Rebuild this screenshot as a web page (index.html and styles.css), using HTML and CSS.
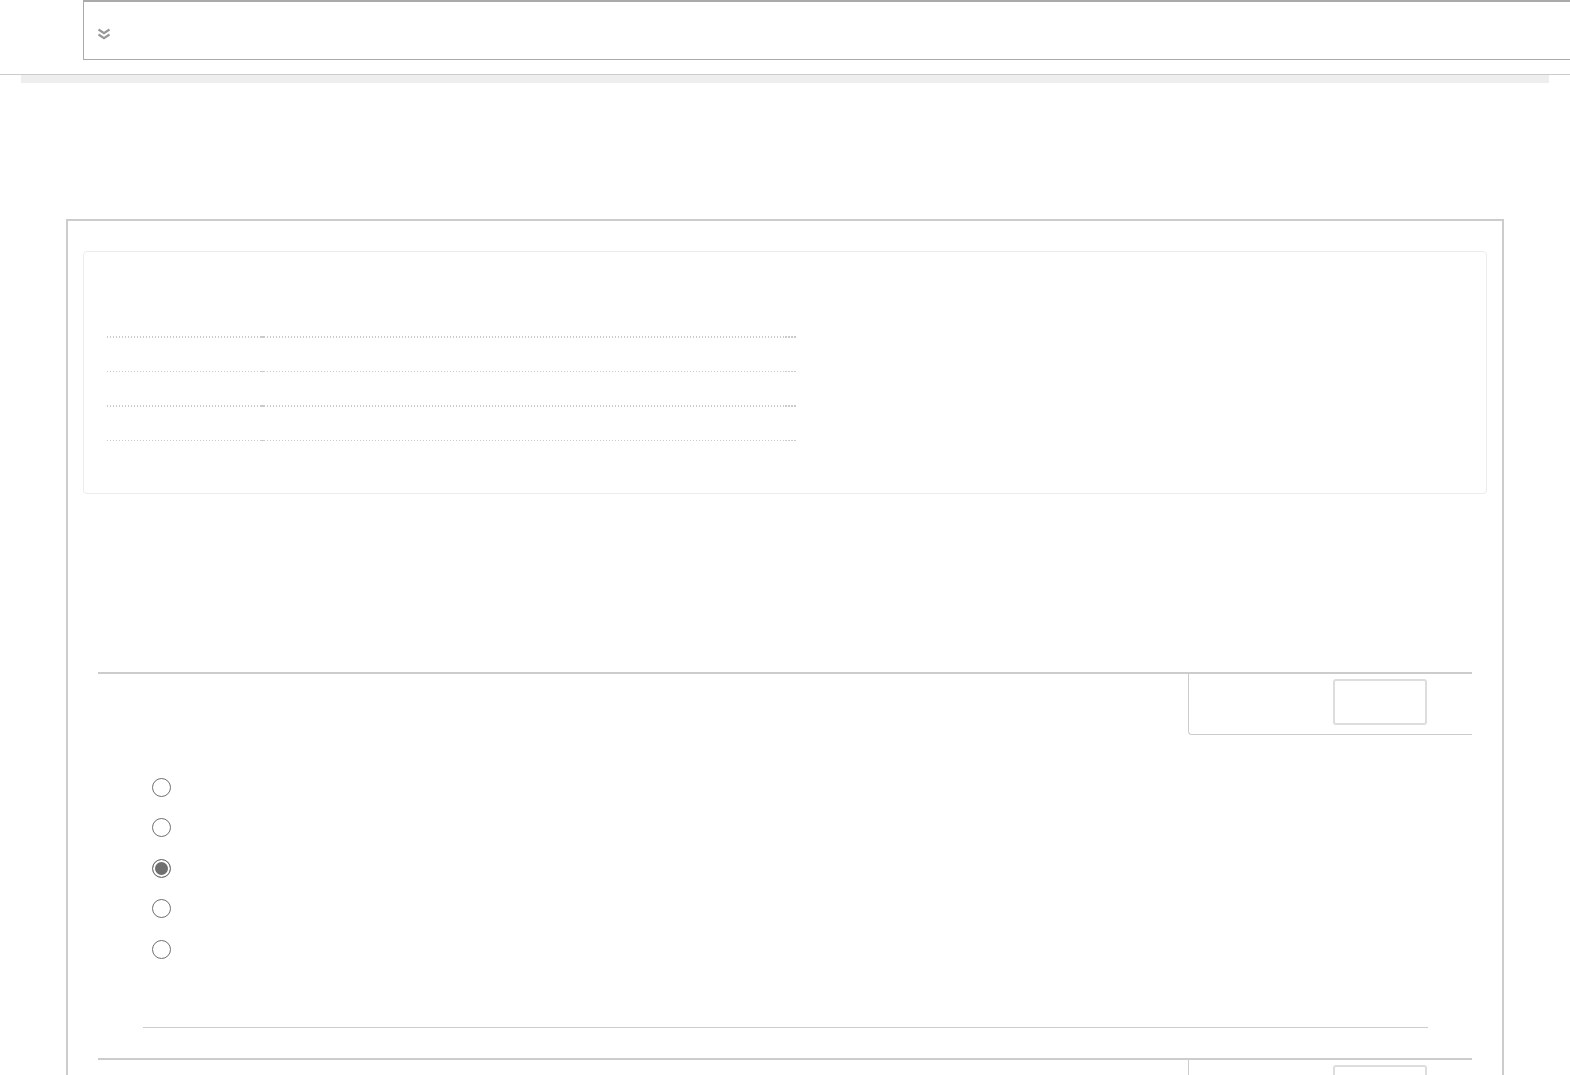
FILE: index.html
```html
<!DOCTYPE html>
<html>
<head>
<meta charset="utf-8">
<link rel="stylesheet" href="styles.css">
</head>
<body>
<header class="topbar">
  <div class="topbox">
    <svg class="chev" width="14" height="12" viewBox="0 0 14 12"><path d="M1.5 1.5 L7 5.2 L12.5 1.5 M1.5 6.5 L7 10.2 L12.5 6.5" fill="none" stroke="#999999" stroke-width="2.2"/></svg>
  </div>
</header>
<div class="rule"></div>
<div class="graybar"></div>

<main class="panel">
  <div class="card">
    <div class="drow thick"><span class="d1"></span><span class="d2"></span><span class="d3"></span><span class="d4"></span></div>
    <div class="drow thin"><span class="d1"></span><span class="d2"></span><span class="d3"></span><span class="d4"></span></div>
    <div class="drow thick"><span class="d1"></span><span class="d2"></span><span class="d3"></span><span class="d4"></span></div>
    <div class="drow thin"><span class="d1"></span><span class="d2"></span><span class="d3"></span><span class="d4"></span></div>
  </div>

  <section class="question">
    <div class="qhead">
      <div class="qspace"></div>
      <div class="qside"><span class="qbtn"></span></div>
    </div>
    <div class="options">
      <div class="opt"><span class="radio"></span></div>
      <div class="opt"><span class="radio"></span></div>
      <div class="opt"><span class="radio on"></span></div>
      <div class="opt"><span class="radio"></span></div>
      <div class="opt"><span class="radio"></span></div>
    </div>
    <div class="qrule"></div>
  </section>

  <section class="question">
    <div class="qhead">
      <div class="qspace"></div>
      <div class="qside"><span class="qbtn"></span></div>
    </div>
  </section>
</main>
</body>
</html>
```

FILE: styles.css
```css
html, body {
  margin: 0;
  padding: 0;
  background: #fff;
  font-family: "Liberation Sans", Arial, sans-serif;
  overflow: hidden;
}

.topbar {
  padding-left: 83px;
}

.topbox {
  height: 60px;
  box-sizing: border-box;
  border-top: 2px solid #aaaaaa;
  border-left: 1px solid #aaaaaa;
  border-bottom: 1px solid #aaaaaa;
  padding-left: 13px;
  padding-top: 26px;
}

.chev {
  display: block;
}

.rule {
  margin-top: 14px;
  border-top: 1px solid #cccccc;
}

.graybar {
  margin: 0 21px;
  height: 8px;
  background: #eeeeee;
}

.panel {
  margin: 136px 66px 0 66px;
  border: 2px solid #cccccc;
  border-bottom: none;
  height: 900px;
}

.card {
  margin: 30px 15px 0 15px;
  height: 243px;
  box-sizing: border-box;
  border: 1px solid #ececec;
  border-radius: 4px;
  padding: 84px 0 0 23px;
}

.drow {
  display: flex;
  width: 689px;
}
.drow.thick { height: 2px; }
.drow.thin { height: 1px; }
.drow + .drow.thin { margin-top: 32.5px; }
.drow + .drow.thick { margin-top: 33.5px; }

.d1, .d3 {
  height: 100%;
  background: repeating-linear-gradient(to right, #cacaca 0 1px, transparent 1px 3px);
}
.d1 { width: 153px; }
.d3 { width: 521px; }
.d2 {
  width: 4px;
  height: 100%;
  background: #cacaca;
}
.d4 {
  width: 11px;
  height: 100%;
  background: repeating-linear-gradient(to right, #cacaca 0 2px, transparent 2px 3px);
}

.question {
  margin: 0 30px 0 30px;
}

.card + .question {
  margin-top: 178px;
}

.qhead {
  display: flex;
  border-top: 2px solid #cccccc;
}

.qspace {
  flex: 1;
}

.qside {
  width: 284px;
  height: 61px;
  box-sizing: border-box;
  border-left: 1px solid #cccccc;
  border-bottom: 1px solid #cccccc;
  border-bottom-left-radius: 4px;
  display: flex;
  justify-content: flex-end;
  padding: 5px 45px 0 0;
}

.qbtn {
  width: 94px;
  height: 46px;
  box-sizing: border-box;
  border: 2px solid #dddddd;
  border-radius: 3px;
}

.options {
  padding: 32px 0 0 54px;
}

.opt {
  height: 40.5px;
  display: flex;
  align-items: center;
}

.radio {
  width: 19px;
  height: 19px;
  box-sizing: border-box;
  border: 1.5px solid #6f6f6f;
  border-radius: 50%;
  background: #fff;
}

.radio.on {
  background: #707070;
  box-shadow: inset 0 0 0 2px #fff;
}

.qrule {
  margin: 57px 44px 30px 45px;
  border-top: 1px solid #cccccc;
}
```
